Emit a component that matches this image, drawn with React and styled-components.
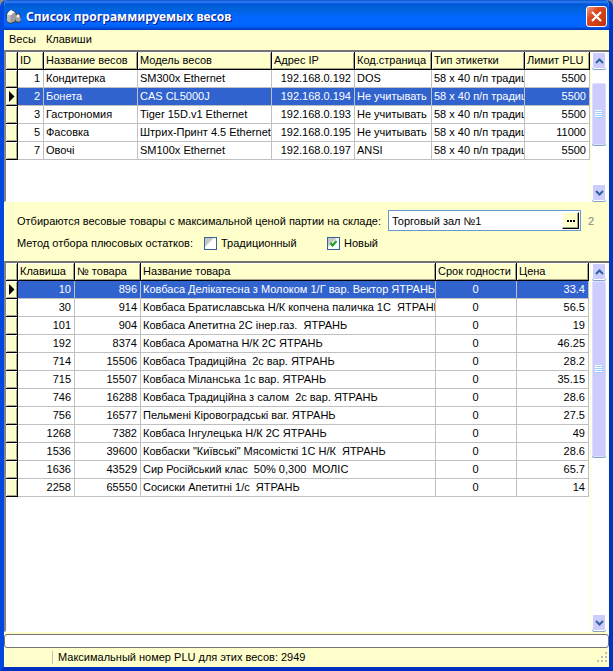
import React, { useState } from "react";
import styled, { createGlobalStyle } from "styled-components";

const cream = "#ffffcc";
const select = "#3163ce";

const Global = createGlobalStyle`
  *, *::before, *::after { box-sizing: border-box; }
  body { margin: 0; background: #8c8c8c; }
  button, input { font: inherit; color: inherit; }
`;

const Window = styled.main`
  display: flex;
  flex-direction: column;
  min-height: 100vh;
  border: solid;
  border-width: 0 4px 4px;
  border-color: #0054e3 #0036c8 #0030c0 #0048e0;
  border-radius: 7px 7px 0 0;
  overflow: hidden;
  background: ${cream};
  color: #000;
  font: 11px/16px "Liberation Sans", Arial, sans-serif;
`;

const TitleBar = styled.header`
  display: flex;
  align-items: center;
  gap: 4px;
  height: 30px;
  padding: 3px 2px 0;
  background: linear-gradient(#0a50d0 0, #2f80f0 2px, #0055dc 4px, #0062d8 8px, #0066ff 18px, #0066ff 26px, #0038c0 30px);
`;

const Title = styled.h1`
  flex: 1;
  margin: 0;
  color: #fff;
  font: bold 12px/18px "Noto Sans", sans-serif;
  text-shadow: 1px 1px 0 #0a1883;
`;

const CloseButton = styled.button`
  display: grid;
  place-items: center;
  width: 21px;
  height: 21px;
  padding: 0;
  border: 1px solid #fff;
  border-radius: 3px;
  background: linear-gradient(135deg, #f0a088, #dc4820 35%, #c03008);
`;

const MenuBar = styled.nav`
  display: flex;
  gap: 10px;
  height: 20px;
  padding: 0 5px 2px;
`;

const MenuItem = styled.button`
  padding: 0;
  border: 0;
  background: none;
`;

const GridPane = styled.section`
  display: flex;
  flex: ${(p) => (p.$grow ? "1 0 auto" : "none")};
  min-height: ${(p) => p.$height}px;
  border-top: 2px solid #737373;
  border-left: 2px solid #848484;
  border-bottom: 1px solid #fff;
  background: #fff;
`;

const TableArea = styled.div`
  flex: 1;
  min-width: 0;
  padding-right: ${(p) => p.$inset}px;
`;

const Table = styled.table`
  width: 100%;
  table-layout: fixed;
  border-collapse: separate;
  border-spacing: 0;
`;

const Col = styled.col`
  width: ${(p) => (p.$w ? p.$w + "px" : "auto")};
`;

const HeadCell = styled.th`
  height: 18px;
  padding: 0 0 0 2px;
  overflow: hidden;
  border-right: 1px solid #000;
  border-bottom: 1px solid #000;
  background: ${cream};
  box-shadow: inset 1px 1px 0 #fff, inset -1px -1px 0 #a5a58c;
  font-weight: 400;
  line-height: 17px;
  text-align: left;
  white-space: nowrap;
`;

const MarkCell = styled(HeadCell)`
  padding: 0;
  svg { display: block; margin-left: 2px; }
`;

const Cell = styled.td`
  height: 18px;
  padding: 0 3px 0 2px;
  overflow: hidden;
  border-right: 1px solid #c0c0c0;
  border-bottom: 1px solid #c0c0c0;
  line-height: 17px;
  text-align: ${(p) => p.$align};
  white-space: pre;
`;

const Row = styled.tr`
  background: ${(p) => (p.$active ? select : "#fff")};
  color: ${(p) => (p.$active ? "#fff" : "#000")};
`;

const Scroll = styled.div`
  display: flex;
  flex-direction: column;
  width: 19px;
  padding: 0 2px 0 1px;
  border-left: 1px solid ${cream};
  border-right: 1px solid ${cream};
`;

const ScrollButton = styled.button`
  display: grid;
  place-items: center;
  height: 17px;
  padding: 0;
  border: 1px solid #fff;
  border-radius: 2px;
  background: #ccccff;
  box-shadow: 0 1px 0 #84a5c6;
`;

const Track = styled.div`
  flex: 1;
  padding-top: ${(p) => p.$offset}px;
`;

const Thumb = styled.div`
  display: grid;
  place-items: center;
  height: ${(p) => p.$size}px;
  border: 1px solid #dedeff;
  border-radius: 2px;
  background: #ccccff;
  box-shadow: 0 1px 0 #84a5c6;
`;

const Filters = styled.form`
  display: flex;
  flex-direction: column;
  gap: 4px;
  padding: 8px 13px 10px;
`;

const FilterRow = styled.div`
  display: flex;
  align-items: center;
  min-height: ${(p) => p.$h}px;
`;

const StoreLabel = styled.label`
  width: 371px;
  white-space: nowrap;
`;

const StoreBox = styled.div`
  display: flex;
  flex: 1;
  height: 21px;
  border: 1px solid #6699cc;
  padding: 1px;
  background: #fff;
`;

const StoreInput = styled.input`
  flex: 1;
  min-width: 0;
  padding: 0 2px;
  border: 0;
  outline: 0;
  background: transparent;
`;

const MoreButton = styled.button`
  display: grid;
  place-items: center;
  width: 17px;
  padding: 0;
  border: solid;
  border-width: 1px;
  border-color: #fff #000 #000 #fff;
  background: ${cream};
  box-shadow: inset -1px -1px 0 #a5a58c;
`;

const StoreCode = styled.output`
  width: 15px;
  padding-left: 7px;
  color: #848484;
`;

const MethodLegend = styled.span`
  width: 187px;
  white-space: nowrap;
`;

const Choice = styled.label`
  display: flex;
  align-items: center;
  gap: 4px;
  width: ${(p) => p.$w}px;
`;

const TickFrame = styled.span`
  display: grid;
  > * { grid-area: 1 / 1; }
  svg { pointer-events: none; }
`;

const Tick = styled.input`
  width: 13px;
  height: 13px;
  margin: 0;
  appearance: none;
  border: 1px solid #31659c;
  background: linear-gradient(135deg, #c6c6c6 0 35%, #fff 45%);
`;

const ProgressTrack = styled.div`
  height: 14px;
  margin: 2px 0 0;
  border: 1px solid #737373;
  border-radius: 3px;
  background: #fff;
`;

const StatusBar = styled.footer`
  display: flex;
  align-items: center;
  height: 19px;
`;

const StatusText = styled.span`
  flex: 1;
  margin-left: 48px;
  padding-left: 5px;
  border-left: 1px solid #c0c0c0;
  line-height: 13px;
`;

const scalesColumns = [
  { title: "ID", w: 26, align: "right" },
  { title: "Название весов", w: 94, align: "left" },
  { title: "Модель весов", w: 134, align: "left" },
  { title: "Адрес IP", w: 83, align: "right" },
  { title: "Код.страница", w: 77, align: "left" },
  { title: "Тип этикетки", align: "left" },
  { title: "Лимит PLU", w: 65, align: "right" },
];

const label = "58 x 40 п/п традиц";
const scalesRows = [
  ["1", "Кондитерка", "SM300x Ethernet", "192.168.0.192", "DOS", label, "5500"],
  ["2", "Бонета", "CAS CL5000J", "192.168.0.194", "Не учитывать", label, "5500"],
  ["3", "Гастрономия", "Tiger 15D.v1 Ethernet", "192.168.0.193", "Не учитывать", label, "5500"],
  ["5", "Фасовка", "Штрих-Принт 4.5 Ethernet", "192.168.0.195", "Не учитывать", label, "11000"],
  ["7", "Овочі", "SM100x Ethernet", "192.168.0.197", "ANSI", label, "5500"],
];

const goodsColumns = [
  { title: "Клавиша", w: 57, align: "right" },
  { title: "№ товара", w: 66, align: "right" },
  { title: "Название товара", align: "left" },
  { title: "Срок годности", w: 81, align: "center" },
  { title: "Цена", w: 72, align: "right" },
];

const goodsRows = [
  ["10", "896", "Ковбаса Делікатесна з Молоком 1/Г вар. Вектор ЯТРАНЬ", "0", "33.4"],
  ["30", "914", "Ковбаса Братиславська Н/К копчена паличка 1С  ЯТРАНЬ", "0", "56.5"],
  ["101", "904", "Ковбаса Апетитна 2С інер.газ.  ЯТРАНЬ", "0", "19"],
  ["192", "8374", "Ковбаса Ароматна Н/К 2С ЯТРАНЬ", "0", "46.25"],
  ["714", "15506", "Ковбаса Традиційна  2с вар. ЯТРАНЬ", "0", "28.2"],
  ["715", "15507", "Ковбаса Міланська 1с вар. ЯТРАНЬ", "0", "35.15"],
  ["746", "16288", "Ковбаса Традиційна з салом  2с вар. ЯТРАНЬ", "0", "28.6"],
  ["756", "16577", "Пельмені Кіровоградські ваг. ЯТРАНЬ", "0", "27.5"],
  ["1268", "7382", "Ковбаса Інгулецька Н/К 2С ЯТРАНЬ", "0", "49"],
  ["1536", "39600", "Ковбаски \"Київські\" Мясомісткі 1С Н/К  ЯТРАНЬ", "0", "28.6"],
  ["1636", "43529", "Сир Російський клас  50% 0,300  МОЛІС", "0", "65.7"],
  ["2258", "65550", "Сосиски Апетитні 1/с  ЯТРАНЬ", "0", "14"],
];

const Chevron = ({ up }) => (
  <svg width="9" height="6" viewBox="0 0 9 6" aria-hidden="true">
    <path d={up ? "M1 5L4.5 1.5L8 5" : "M1 1L4.5 4.5L8 1"} fill="none" stroke="#31639c" strokeWidth="2" />
  </svg>
);

const ScalesIcon = () => (
  <svg width="16" height="16" viewBox="0 0 16 16" aria-hidden="true">
    <path d="M0 6L2 2L5 1L9 2L10 5L13 4L15 7V12L13 14L10 13L4 15L1 13Z" fill="#3a3a42" />
    <path d="M1 6L2 3L5 1L9 3L10 8L9 12L4 14L1 12Z" fill="#bdbdbd" />
    <path d="M1 6L3 3L5 1L8 3L5 6Z" fill="#fff" />
    <path d="M5 6L9 4L10 8L9 12L4 14Z" fill="#9c9c9c" />
    <path d="M10 7L12 5L14 7L15 11L13 13L10 12Z" fill="#a5a5a5" />
    <path d="M10 7L12 5L14 7L12 9Z" fill="#efefef" />
  </svg>
);

function ScrollBar({ offset, size }) {
  return (
    <Scroll>
      <ScrollButton type="button" aria-label="Вверх"><Chevron up /></ScrollButton>
      <Track $offset={offset}>
        <Thumb $size={size}>
          <svg width="8" height="8" viewBox="0 0 8 8" aria-hidden="true">
            <path d="M0 .5H7M0 2.5H7M0 4.5H7M0 6.5H7" stroke="#fff" />
            <path d="M1 1.5H8M1 3.5H8M1 5.5H8M1 7.5H8" stroke="#9cceff" />
          </svg>
        </Thumb>
      </Track>
      <ScrollButton type="button" aria-label="Вниз"><Chevron /></ScrollButton>
    </Scroll>
  );
}

function DataGrid({ name, columns, rows, initial, ...pane }) {
  const [active, setActive] = useState(initial);
  return (
    <GridPane $height={pane.height} $grow={pane.grow}>
      <TableArea $inset={pane.inset}>
        <Table aria-label={name}>
          <colgroup>
            <Col $w={12} />
            {columns.map((c) => <Col key={c.title} $w={c.w} />)}
          </colgroup>
          <thead>
            <tr>
              <MarkCell as="td" />
              {columns.map((c) => <HeadCell key={c.title} scope="col">{c.title}</HeadCell>)}
            </tr>
          </thead>
          <tbody>
            {rows.map((row, i) => (
              <Row key={row[0]} $active={i === active} onClick={() => setActive(i)}>
                <MarkCell as="td">
                  {i === active && (
                    <svg width="7" height="11" viewBox="0 0 7 11" aria-hidden="true">
                      <path d="M1 0L6.5 5.5L1 11Z" fill="#000" />
                    </svg>
                  )}
                </MarkCell>
                {row.map((v, j) => <Cell key={j} $align={columns[j].align}>{v}</Cell>)}
              </Row>
            ))}
          </tbody>
        </Table>
      </TableArea>
      <ScrollBar offset={pane.offset} size={pane.size} />
    </GridPane>
  );
}

function CheckBox({ children, width, initial }) {
  const [on, setOn] = useState(initial);
  return (
    <Choice $w={width}>
      <TickFrame>
        <Tick type="checkbox" checked={on} onChange={(e) => setOn(e.target.checked)} />
        {on && (
          <svg width="13" height="13" viewBox="0 0 13 13" aria-hidden="true">
            <path d="M3.5 6L5.5 8.5L9.5 4" fill="none" stroke="#21a121" strokeWidth="2.2" />
          </svg>
        )}
      </TickFrame>
      {children}
    </Choice>
  );
}

export default function App() {
  const [store, setStore] = useState("Торговый зал №1");
  return (
    <>
      <Global />
      <Window>
        <TitleBar>
          <ScalesIcon />
          <Title>Список программируемых весов</Title>
          <CloseButton type="button" aria-label="Закрыть">
            <svg width="13" height="13" viewBox="0 0 13 13" aria-hidden="true">
              <path d="M2 2L11 11M11 2L2 11" stroke="#fff" strokeWidth="2.2" />
            </svg>
          </CloseButton>
        </TitleBar>
        <MenuBar>
          <MenuItem type="button">Весы</MenuItem>
          <MenuItem type="button">Клавиши</MenuItem>
        </MenuBar>
        <DataGrid name="Весы" columns={scalesColumns} rows={scalesRows} initial={1} height={152} inset={0} offset={14} size={62} />
        <Filters onSubmit={(e) => e.preventDefault()}>
          <FilterRow $h={21}>
            <StoreLabel htmlFor="store">Отбираются весовые товары с максимальной ценой партии на складе:</StoreLabel>
            <StoreBox>
              <StoreInput id="store" value={store} onChange={(e) => setStore(e.target.value)} />
              <MoreButton type="button" aria-label="Выбрать склад">
                <svg width="8" height="2" viewBox="0 0 8 2" aria-hidden="true">
                  <path d="M0 0H2V2H0ZM3 0H5V2H3ZM6 0H8V2H6Z" fill="#000" />
                </svg>
              </MoreButton>
            </StoreBox>
            <StoreCode>2</StoreCode>
          </FilterRow>
          <FilterRow $h={16}>
            <MethodLegend>Метод отбора плюсовых остатков:</MethodLegend>
            <CheckBox width={123} initial={false}>Традиционный</CheckBox>
            <CheckBox width={80} initial>Новый</CheckBox>
          </FilterRow>
        </Filters>
        <DataGrid name="Товары" columns={goodsColumns} rows={goodsRows} initial={0} height={300} grow inset={1} offset={1} size={176} />
        <ProgressTrack role="progressbar" aria-label="Ход выполнения" aria-valuenow={0} />
        <StatusBar>
          <StatusText>Максимальный номер PLU для этих весов: 2949</StatusText>
          <svg width="12" height="12" viewBox="0 0 12 12" aria-hidden="true">
            <path d="M8 0H10V2H8ZM4 4H6V6H4ZM8 4H10V6H8ZM0 8H2V10H0ZM4 8H6V10H4ZM8 8H10V10H8Z" fill="#bdbdbd" />
          </svg>
        </StatusBar>
      </Window>
    </>
  );
}
